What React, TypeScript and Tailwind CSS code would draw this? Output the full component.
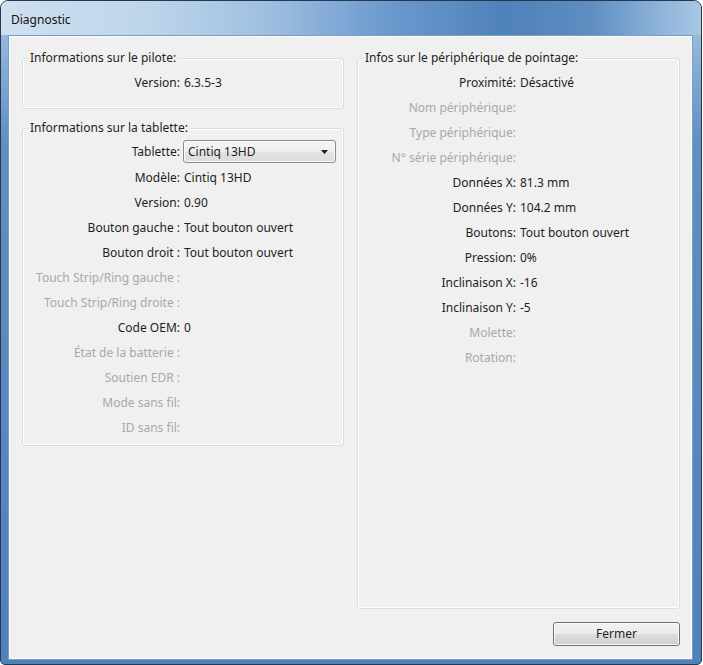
import React from "react";

type Row = { label: string; value?: string; off?: boolean };

const piloteRows: Row[] = [{ label: "Version:", value: "6.3.5-3" }];

// first row of the tablet group is the combo box, drawn separately
const tabletteRows: Row[] = [
  { label: "Modèle:", value: "Cintiq 13HD" },
  { label: "Version:", value: "0.90" },
  { label: "Bouton gauche :", value: "Tout bouton ouvert" },
  { label: "Bouton droit :", value: "Tout bouton ouvert" },
  { label: "Touch Strip/Ring gauche :", off: true },
  { label: "Touch Strip/Ring droite :", off: true },
  { label: "Code OEM:", value: "0" },
  { label: "État de la batterie :", off: true },
  { label: "Soutien EDR :", off: true },
  { label: "Mode sans fil:", off: true },
  { label: "ID sans fil:", off: true },
];

const pointageRows: Row[] = [
  { label: "Proximité:", value: "Désactivé" },
  { label: "Nom périphérique:", off: true },
  { label: "Type périphérique:", off: true },
  { label: "N° série périphérique:", off: true },
  { label: "Données X:", value: "81.3 mm" },
  { label: "Données Y:", value: "104.2 mm" },
  { label: "Boutons:", value: "Tout bouton ouvert" },
  { label: "Pression:", value: "0%" },
  { label: "Inclinaison X:", value: "-16" },
  { label: "Inclinaison Y:", value: "-5" },
  { label: "Molette:", off: true },
  { label: "Rotation:", off: true },
];

function InfoRow({ row, labelWidth }: { row: Row; labelWidth: string }) {
  return (
    <div className="flex h-[25px] items-center whitespace-nowrap">
      <span className={`${labelWidth} shrink-0 text-right ${row.off ? "text-[#a8a8a8]" : "text-[#1e1e1e]"}`}>
        {row.label}
      </span>
      {row.value && <span className="ml-[4px] text-[#1e1e1e]">{row.value}</span>}
    </div>
  );
}

function GroupBox({ title, className, children }: { title: string; className: string; children: React.ReactNode }) {
  return (
    <fieldset className={`rounded-[3px] border border-[#d5dfe5] shadow-[inset_0_0_0_1px_#ffffff] ${className}`}>
      <legend className="ml-[5px] bg-[#f0f0f0] px-[2px] leading-[16px] text-[#1e1e1e]">{title}</legend>
      {children}
    </fieldset>
  );
}

export default function App() {
  return (
    <div className="h-[665px] w-[703px] bg-white font-['Noto_Sans',sans-serif] text-[12px]">
      {/* Aero window frame */}
      <div className="flex h-[665px] w-[702px] flex-col overflow-hidden rounded-t-[8px] rounded-b-[5px] border border-[#26384f] bg-[linear-gradient(180deg,#a9c6e3_0px,#5f8fc4_140px,#4f81b9_100%)]">
        <div className="flex h-[34px] shrink-0 items-center bg-[linear-gradient(90deg,#cfe0f0_0%,#bcd4ea_22%,#9fbfe0_38%,#6b9ace_55%,#4f82b9_72%,#5d8dc1_84%,#8db3da_94%,#a8c7e4_100%)] pl-[10px] pt-[4px] text-[#121212]">
          Diagnostic
        </div>

        {/* Client area */}
        <div className="mb-[4px] ml-[7px] mr-[8px] flex flex-1 flex-col border border-[#7d9cbf] bg-[#f0f0f0] pb-[13px] pl-[13px] pr-[12px] pt-[14px] shadow-[inset_0_0_0_1px_#f8fbfd]">
          <div className="flex min-h-0 flex-1 gap-[13px]">
            <div className="flex w-[322px] shrink-0 flex-col">
              <GroupBox title="Informations sur le pilote:" className="h-[59px] pt-[4px]">
                {piloteRows.map((r) => (
                  <InfoRow key={r.label} row={r} labelWidth="w-[157px]" />
                ))}
              </GroupBox>

              <GroupBox title="Informations sur la tablette:" className="mt-[11px] h-[326px] pt-[2px]">
                <div className="flex h-[27px] items-center whitespace-nowrap">
                  <span className="w-[157px] shrink-0 text-right text-[#1e1e1e]">Tablette:</span>
                  <div className="ml-[3px] flex h-[23px] w-[153px] items-center justify-between rounded-[3px] border border-[#8b8b8b] bg-[linear-gradient(180deg,#f6f6f6_0%,#eeeeee_50%,#e3e3e3_51%,#dcdcdc_100%)] pl-[4px] pr-[7px] text-[#1e1e1e] shadow-[inset_0_0_0_1px_#fbfbfb]">
                    <span>Cintiq 13HD</span>
                    <svg width="7" height="4" viewBox="0 0 7 4">
                      <path d="M0 0h7L3.5 4z" fill="#1a1a1a" />
                    </svg>
                  </div>
                </div>
                {tabletteRows.map((r, i) => (
                  <InfoRow key={i} row={r} labelWidth="w-[157px]" />
                ))}
              </GroupBox>
            </div>

            <GroupBox title="Infos sur le périphérique de pointage:" className="w-[323px] shrink-0 pt-[4px]">
              {pointageRows.map((r) => (
                <InfoRow key={r.label} row={r} labelWidth="w-[158px]" />
              ))}
            </GroupBox>
          </div>

          <div className="mt-[13px] flex justify-end">
            <button className="h-[24px] w-[127px] rounded-[3px] border border-[#707070] bg-[linear-gradient(180deg,#f2f2f2_0%,#ebebeb_50%,#dddddd_51%,#cfcfcf_100%)] text-[#1e1e1e] shadow-[inset_0_0_0_1px_#fcfcfc]">
              Fermer
            </button>
          </div>
        </div>
      </div>
    </div>
  );
}
